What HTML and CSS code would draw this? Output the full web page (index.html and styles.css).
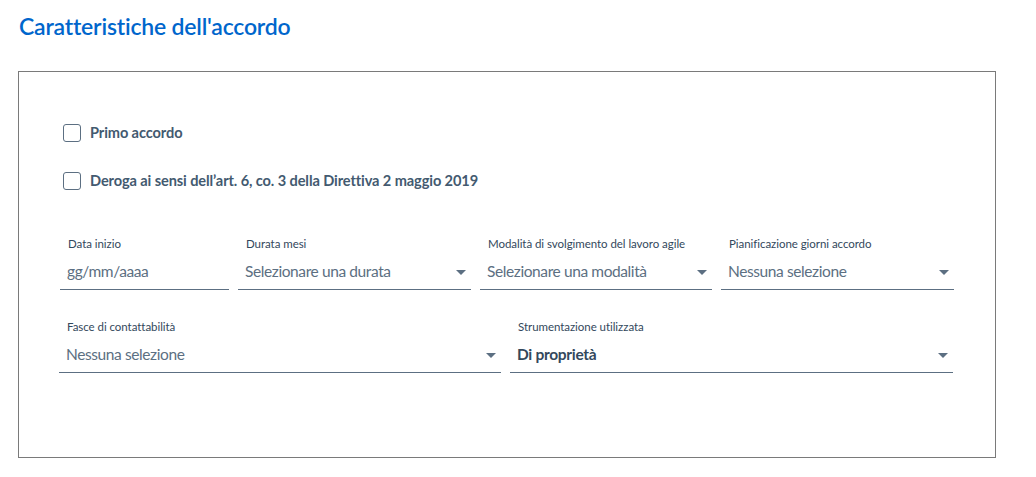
FILE: index.html
```html
<!DOCTYPE html>
<html lang="it">
<head>
<meta charset="utf-8">
<title>Caratteristiche dell'accordo</title>
<link rel="stylesheet" href="styles.css">
</head>
<body>
<div class="page">
  <h2 class="title">Caratteristiche dell'accordo</h2>
  <section class="card">
    <div class="checks">
      <label class="check"><span class="box"></span><span class="check-text">Primo accordo</span></label>
      <label class="check"><span class="box"></span><span class="check-text">Deroga ai sensi dell’art. 6, co. 3 della Direttiva 2 maggio 2019</span></label>
    </div>
    <div class="row row-4">
      <div class="field">
        <div class="field-label">Data inizio</div>
        <div class="field-control"><span class="placeholder">gg/mm/aaaa</span></div>
      </div>
      <div class="field">
        <div class="field-label">Durata mesi</div>
        <div class="field-control"><span class="placeholder">Selezionare una durata</span><span class="caret"></span></div>
      </div>
      <div class="field">
        <div class="field-label">Modalità di svolgimento del lavoro agile</div>
        <div class="field-control"><span class="placeholder">Selezionare una modalità</span><span class="caret"></span></div>
      </div>
      <div class="field">
        <div class="field-label">Pianificazione giorni accordo</div>
        <div class="field-control"><span class="placeholder">Nessuna selezione</span><span class="caret"></span></div>
      </div>
    </div>
    <div class="row row-2">
      <div class="field">
        <div class="field-label">Fasce di contattabilità</div>
        <div class="field-control"><span class="placeholder">Nessuna selezione</span><span class="caret"></span></div>
      </div>
      <div class="field">
        <div class="field-label">Strumentazione utilizzata</div>
        <div class="field-control"><span class="value">Di proprietà</span><span class="caret"></span></div>
      </div>
    </div>
  </section>
</div>
</body>
</html>
```

FILE: styles.css
```css
* { box-sizing: border-box; }
html, body { margin: 0; padding: 0; background: #fff; }
body { font-family: "Lato", "Open Sans", sans-serif; color: #33485c; }

.page { padding: 9px 41px 0 18px; }

.title {
  margin: 0 0 28px 1px;
  font-size: 23px;
  line-height: 34px;
  font-weight: 600;
  color: #0066cc;
  letter-spacing: -0.2px;
}

.card {
  border: 1px solid #7a7a7a;
  width: 978px;
  height: 387px;
  padding: 52px 41px 0 41px;
}

.checks { display: flex; flex-direction: column; gap: 30px; padding-left: 3px; }
.check { display: flex; align-items: center; gap: 9px; height: 18px; }
.box {
  width: 18px; height: 18px;
  border: 1.5px solid #5c6f82;
  border-radius: 3px;
  flex: none;
}
.check-text { font-size: 14.6px; line-height: 16px; font-weight: 700; color: #435a70; letter-spacing: -0.1px; margin-top: -1px; }

.row { display: grid; gap: 9px; }
.row-4 { grid-template-columns: 169px 233px 232px 233px; margin-top: 46px; }
.row-2 { grid-template-columns: 442px 443px; margin-top: 29px; margin-left: -1px; }

.field { display: flex; flex-direction: column; }
.field-label {
  font-size: 11.5px;
  line-height: 16px;
  font-weight: 400;
  color: #33485c;
  padding-left: 8px;
  white-space: nowrap;
  letter-spacing: -0.05px;
}
.field-control {
  display: flex; align-items: center; justify-content: space-between;
  height: 38px;
  padding: 0 5px 0 7px;
  border-bottom: 1px solid #5c6f82;
}
.placeholder { font-size: 15.5px; color: #5c6f82; letter-spacing: -0.4px; }
.value { font-size: 15.5px; font-weight: 700; color: #33485c; letter-spacing: -0.3px; }
.caret {
  width: 0; height: 0;
  border-left: 5px solid transparent;
  border-right: 5px solid transparent;
  border-top: 5px solid #5c6f82;
  margin-top: 4px;
}
```
